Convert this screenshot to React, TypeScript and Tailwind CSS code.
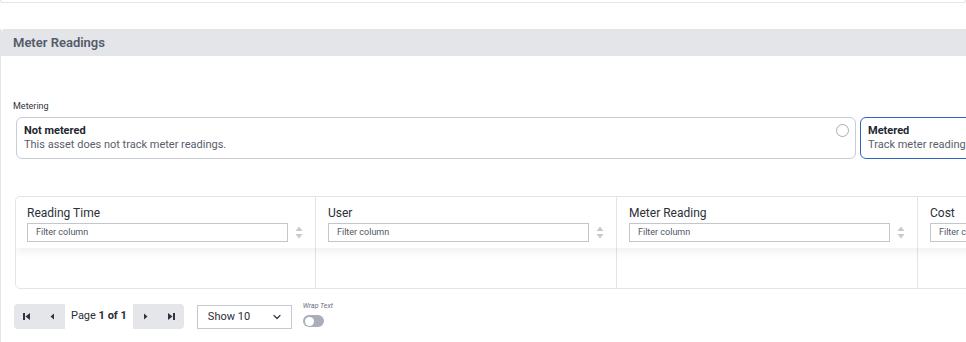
import { ChevronDown } from 'lucide-react'

const font = { fontFamily: 'Roboto, "Liberation Sans", sans-serif' }

const columns = ['Reading Time', 'User', 'Meter Reading', 'Cost']

function SortIcon() {
  return (
    <svg width="8" height="13" viewBox="0 0 8 13" className="shrink-0">
      <path d="M4 0.5 L7.5 5 L0.5 5 Z" fill="#c7cad0" />
      <path d="M4 12.5 L7.5 8 L0.5 8 Z" fill="#c7cad0" />
    </svg>
  )
}

function FirstIcon() {
  return (
    <svg width="9" height="9" viewBox="0 0 9 9">
      <rect x="1" y="1" width="2" height="7" fill="#2f3441" />
      <path d="M8 1 L8 8 L3.5 4.5 Z" fill="#2f3441" />
    </svg>
  )
}

function PrevIcon() {
  return (
    <svg width="9" height="9" viewBox="0 0 9 9">
      <path d="M6 1.5 L6 7.5 L2.5 4.5 Z" fill="#2f3441" />
    </svg>
  )
}

function NextIcon() {
  return (
    <svg width="9" height="9" viewBox="0 0 9 9">
      <path d="M3 1.5 L3 7.5 L6.5 4.5 Z" fill="#2f3441" />
    </svg>
  )
}

function LastIcon() {
  return (
    <svg width="9" height="9" viewBox="0 0 9 9">
      <path d="M1 1 L1 8 L5.5 4.5 Z" fill="#2f3441" />
      <rect x="6" y="1" width="2" height="7" fill="#2f3441" />
    </svg>
  )
}

export default function App() {
  return (
    <div className="w-[966px] h-[342px] overflow-hidden bg-white text-[#262a33]" style={font}>
      {/* bottom of the card above */}
      <div className="h-[3px] border border-t-0 border-[#e4e5e8] rounded-b-[4px]" />

      <div className="mt-[26px] w-[1000px] h-[400px] border-l border-[#e4e5e8]">
        <div className="h-[27px] bg-[#e4e5e9] rounded-tl-[4px] flex items-center pl-[12px] text-[13px] font-semibold text-[#535a6a]">
          Meter Readings
        </div>

        <div className="pl-[12px] pt-[44px]">
          <div className="text-[9px] leading-[12px] text-[#30343c]">Metering</div>

          <div className="mt-[5px] ml-[3px] flex gap-[4px]">
            <div className="w-[840px] h-[42px] shrink-0 border border-[#c9ccd3] rounded-[6px] flex items-start justify-between pl-[7px] pr-[6px] pt-[6px]">
              <div>
                <div className="text-[11px] leading-[14px] font-bold text-[#22262e]">Not metered</div>
                <div className="text-[11px] leading-[14px] text-[#585e6a]">This asset does not track meter readings.</div>
              </div>
              <div className="w-[13px] h-[13px] rounded-full border border-[#a9adb5]" />
            </div>
            <div className="w-[840px] h-[42px] shrink-0 border border-[#2f63c4] rounded-[6px] pl-[7px] pt-[6px]">
              <div className="text-[11px] leading-[14px] font-bold text-[#22262e]">Metered</div>
              <div className="text-[11px] leading-[14px] text-[#585e6a]">Track meter readings for this asset.</div>
            </div>
          </div>

          <div className="mt-[37px] ml-[2px] h-[93px] border border-[#e2e4e8] rounded-[5px] flex flex-col overflow-hidden">
            <div className="flex h-[51px] shadow-[0_4px_8px_rgba(0,0,0,0.06)] relative">
              {columns.map((c, i) => (
                <div
                  key={c}
                  className={`${i === 0 ? 'w-[300px] pl-[11px]' : 'w-[301px] pl-[12px]'} shrink-0 border-r border-[#e2e4e8] pr-[13px] pt-[8px]`}
                >
                  <div className="text-[12px] leading-[16px] text-[#2b2f38]">{c}</div>
                  <div className="mt-[2px] flex items-center gap-[7px]">
                    <div className="w-[261px] h-[19px] shrink-0 border border-[#c3c6cc] flex items-center pl-[8px] text-[9px] text-[#50565f]">
                      Filter column
                    </div>
                    <SortIcon />
                  </div>
                </div>
              ))}
            </div>
            <div className="flex flex-1">
              {columns.map((c, i) => (
                <div key={c} className={`${i === 0 ? 'w-[300px]' : 'w-[301px]'} shrink-0 border-r border-[#e2e4e8]`} />
              ))}
            </div>
          </div>

          <div className="mt-[15px] ml-[1px] flex items-start">
            <div className="h-[25px] flex items-stretch rounded-[4px] overflow-hidden">
              <div className="w-[51px] bg-[#e5e6ea] flex items-center justify-between px-[8px]">
                <FirstIcon />
                <PrevIcon />
              </div>
              <div className="px-[6px] flex items-center text-[11px] text-[#2a2e36]">
                Page&nbsp;<span className="font-bold">1 of 1</span>
              </div>
              <div className="w-[51px] bg-[#e5e6ea] flex items-center justify-between px-[8px]">
                <NextIcon />
                <LastIcon />
              </div>
            </div>

            <div className="ml-[13px] mt-[1px] w-[95px] h-[24px] border border-[#c5c8ce] flex items-center justify-between pl-[10px] pr-[8px] text-[11px] text-[#2a2e36]">
              Show 10
              <ChevronDown size={12} strokeWidth={2.5} className="text-[#3a3f48]" />
            </div>

            <div className="ml-[11px] -mt-[3px] flex flex-col">
              <div className="text-[7px] leading-[10px] italic text-[#6b7180]">Wrap Text</div>
              <div className="mt-[4px] w-[21px] h-[12px] rounded-full bg-[#a9aebb] flex items-center pl-[2px]">
                <div className="w-[9px] h-[9px] rounded-full bg-white" />
              </div>
            </div>
          </div>
        </div>
      </div>
    </div>
  )
}
